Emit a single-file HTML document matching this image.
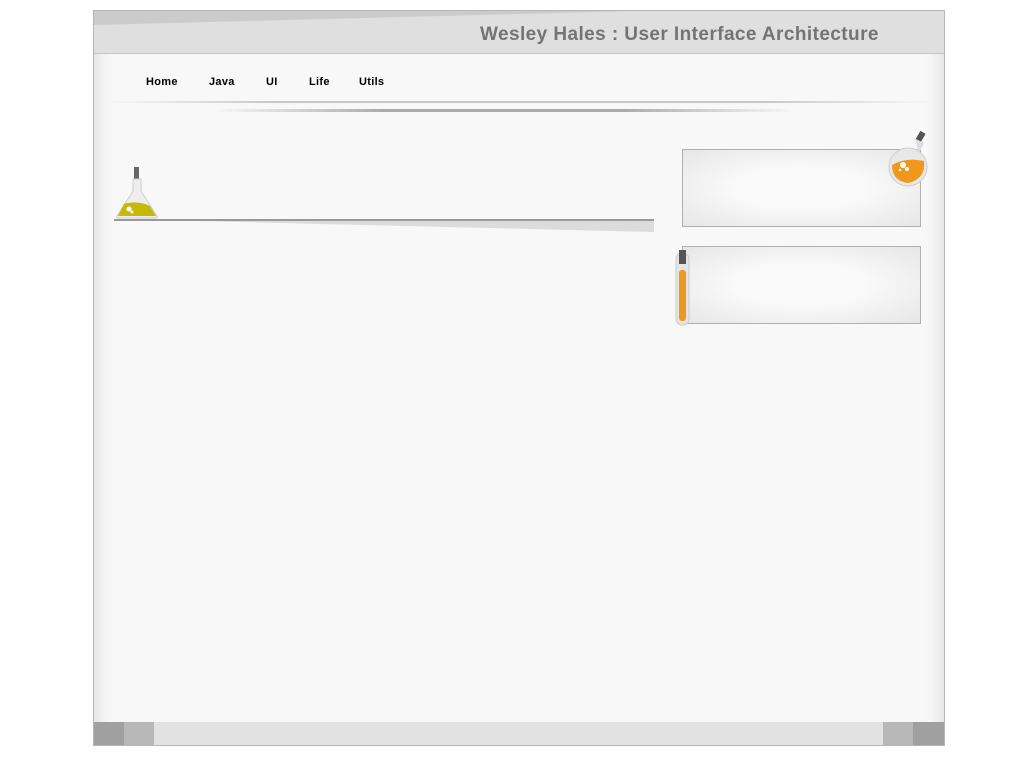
<!DOCTYPE html>
<html><head><meta charset="utf-8"><style>
*{margin:0;padding:0;box-sizing:border-box}
body{width:1024px;height:768px;background:#fff;position:relative;overflow:hidden;font-family:"Liberation Sans",sans-serif}
#wrap{position:absolute;left:93px;top:10px;width:852px;height:736px;border:1px solid #b5b5b5;background:#f8f8f8;overflow:hidden;
box-shadow:inset 14px 0 14px -8px #e4e4e4, inset -14px 0 14px -8px #e4e4e4}
#hdr{position:absolute;left:0;top:0;width:850px;height:43px;background:#dfdfdf;border-bottom:1px solid #c4c4c4}
#title{position:absolute;left:386px;top:13px;font-size:19px;font-weight:bold;color:#747474;letter-spacing:0.42px;white-space:nowrap}
#nav{position:absolute;top:65px;left:52px;font-size:11px;font-weight:bold;color:#000;letter-spacing:0.3px}
#nav span{position:absolute;white-space:nowrap}
.box{position:absolute;left:588px;width:239px;border:1px solid #b0b0b0;background:radial-gradient(ellipse at center,#f9f9f9 40%,#e6e6e6 100%)}
#foot{position:absolute;left:0;top:711px;width:850px;height:23px;background:#e2e2e2}
#foot div{position:absolute;top:0;height:23px;width:30px}
</style></head><body>
<div id="wrap">
 <div id="hdr">
  <svg width="850" height="43" style="position:absolute;left:0;top:0"><polygon points="0,0 540,0 0,14" fill="#cbcbcb"/></svg>
  <div id="title">Wesley Hales : User Interface Architecture</div>
 </div>
 <div id="nav"><span style="left:0">Home</span><span style="left:63px">Java</span><span style="left:120px">UI</span><span style="left:163px">Life</span><span style="left:213px">Utils</span></div>
 <svg width="850" height="120" style="position:absolute;left:0;top:85px">
  <defs>
   <linearGradient id="g1" x1="0" x2="1"><stop offset="0" stop-color="#ccc" stop-opacity="0"/><stop offset=".2" stop-color="#c8c8c8"/><stop offset=".8" stop-color="#c8c8c8"/><stop offset="1" stop-color="#ccc" stop-opacity="0"/></linearGradient>
   <linearGradient id="g2" x1="0" x2="1"><stop offset="0" stop-color="#aaa" stop-opacity="0"/><stop offset=".3" stop-color="#aaa"/><stop offset=".7" stop-color="#aaa"/><stop offset="1" stop-color="#aaa" stop-opacity="0"/></linearGradient>
   <linearGradient id="g3" x1="0" x2="1"><stop offset="0" stop-color="#999" stop-opacity="0"/><stop offset=".1" stop-color="#8a8a8a"/><stop offset="1" stop-color="#aaa"/></linearGradient>
  </defs>
  <rect x="10" y="5" width="830" height="2" fill="url(#g1)"/>
  <rect x="120" y="13" width="580" height="3" fill="url(#g2)"/>
  <rect x="20" y="123" width="540" height="2" fill="url(#g3)"/>
 </svg>
 <svg width="560" height="20" style="position:absolute;left:20px;top:208px"><polygon points="0,0 540,0 540,13" fill="#dcdcdc"/><rect x="0" y="0" width="540" height="2" fill="#999"/></svg>
 <svg width="46" height="54" style="position:absolute;left:21px;top:155px">
  <rect x="19" y="1" width="5" height="12" fill="#666"/>
  <path d="M18 13 L26 13 L26 25 L42 50 Q43 52 40 52 L4 52 Q1 52 2 50 L18 25 Z" fill="#eee" stroke="#ccc"/>
  <path d="M9 38 Q22 34 35 40 L41 50 L3 50 Z" fill="#c6b90a"/>
  <circle cx="14" cy="43" r="2.5" fill="#fff"/><circle cx="17" cy="46" r="1.5" fill="#fff"/>
 </svg>
 <div class="box" style="top:138px;height:78px"></div>
 <div class="box" style="top:235px;height:78px"></div>
 <svg width="48" height="62" style="position:absolute;left:794px;top:120px">
  <g transform="rotate(30 30 10)"><rect x="27" y="0" width="6" height="10" fill="#555"/></g>
  <path d="M28 8 L36 12 L30 24 Z" fill="#ddd"/>
  <circle cx="20" cy="36" r="19" fill="#e8e8e8" stroke="#ccc"/>
  <path d="M4 34 Q18 26 36 30 Q38 48 20 52 Q4 50 4 34Z" fill="#f0971e"/>
  <circle cx="15" cy="34" r="3" fill="#fff"/><circle cx="19" cy="38" r="2" fill="#fff"/><circle cx="12" cy="39" r="1.2" fill="#fff"/>
 </svg>
 <svg width="16" height="78" style="position:absolute;left:581px;top:238px">
  <rect x="1" y="4" width="13" height="72" rx="6" fill="#e4e4e4" stroke="#ccc"/>
  <rect x="4" y="1" width="7" height="14" fill="#555"/>
  <rect x="4" y="21" width="7" height="51" rx="3" fill="#f0971e"/>
 </svg>
 <div id="foot">
  <div style="left:0;background:#a0a0a0"></div><div style="left:30px;background:#b8b8b8"></div>
  <div style="left:789px;background:#b8b8b8"></div><div style="left:819px;background:#a0a0a0;width:31px"></div>
 </div>
</div>
</body></html>
